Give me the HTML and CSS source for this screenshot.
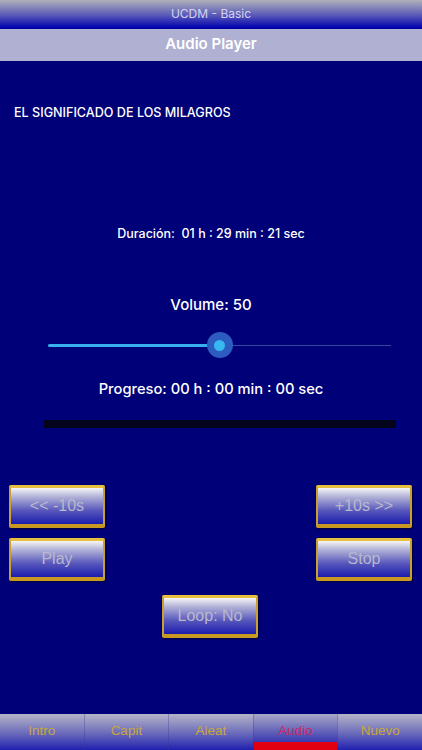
FILE: index.html
```html
<!DOCTYPE html>
<html lang="es">
<head>
  <meta charset="UTF-8">
  <meta name="viewport" content="width=device-width, initial-scale=1.0">
  <title>UCDM - Basic</title>
  <link rel="stylesheet" href="styles.css">
</head>
<body>

<div class="app">
  <div class="statusbar">UCDM - Basic</div>
  <div class="header">Audio Player</div>

  <div class="main">
    <p class="track-title">EL SIGNIFICADO DE LOS MILAGROS</p>
    <p class="duration">Duración:&nbsp; 01 h : 29 min : 21 sec</p>
    <p class="volume">Volume: 50</p>

    <!-- volume slider -->
    <div class="slider">
      <div class="slider-fill" style="width: 50%"></div>
      <div class="slider-rest"></div>
      <div class="slider-thumb" style="left: 50%"><span></span></div>
    </div>

    <p class="progress-label">Progreso: 00 h : 00 min : 00 sec</p>
    <div class="progress-bar"></div>

    <div class="controls">
      <div class="row">
        <button class="button">&lt;&lt; -10s</button>
        <button class="button">+10s &gt;&gt;</button>
      </div>
      <div class="row">
        <button class="button">Play</button>
        <button class="button">Stop</button>
      </div>
      <div class="row center">
        <button class="button">Loop: No</button>
      </div>
    </div>
  </div>

  <div class="tabbar">
    <div class="tab">Intro</div>
    <div class="tab">Capit</div>
    <div class="tab">Aleat</div>
    <div class="tab active">Audio</div>
    <div class="tab">Nuevo</div>
  </div>
</div>

</body>
</html>
```

FILE: styles.css
```css
body {
  margin: 0;
  background-color: #000078;
  font-family: Inter, Roboto, "Liberation Sans", sans-serif;
}
.app {
  height: 750px;
  display: flex;
  flex-direction: column;
}
p {
  margin: 0;
  color: white;
}
.statusbar {
  height: 28px;
  line-height: 28px;
  text-align: center;
  font-size: 12px;
  color: #d4d4f0;
  background: linear-gradient(#b0b0ba, #5858b8 55%, #0000b0);
  border-bottom: 1px solid #0000a0;
}
.header {
  height: 32px;
  line-height: 30px;
  text-align: center;
  font-size: 15px;
  font-weight: 600;
  color: white;
  background-color: #b0b0d2;
}
.main {
  flex: 1;
}
.track-title {
  margin: 44px 0 0 14px;
  font-size: 12.6px;
  line-height: 16px;
  font-weight: 500;
}
.duration {
  margin-top: 105px;
  text-align: center;
  font-size: 12.5px;
  line-height: 16px;
  font-weight: 500;
}
.volume {
  margin-top: 53px;
  text-align: center;
  font-size: 15px;
  line-height: 20px;
  font-weight: 500;
}
.slider {
  position: relative;
  display: flex;
  align-items: center;
  height: 30px;
  margin: 15px 31px 0 48px;
}
.slider-fill {
  height: 3px;
  background-color: #38b0f0;
  border-radius: 2px;
}
.slider-rest {
  flex: 1;
  height: 1px;
  background-color: #3848a0;
}
.slider-thumb {
  position: absolute;
  top: 2px;
  width: 26px;
  height: 26px;
  margin-left: -13px;
  border-radius: 50%;
  background-color: #2c5cc0;
  display: flex;
  align-items: center;
  justify-content: center;
}
.slider-thumb span {
  width: 11px;
  height: 11px;
  border-radius: 50%;
  background-color: #38b8f0;
}
.progress-label {
  margin-top: 19px;
  text-align: center;
  font-size: 14.7px;
  line-height: 20px;
  font-weight: 500;
}
.progress-bar {
  height: 8px;
  margin: 21px 26px 0 44px;
  background-color: #04041c;
}
.controls {
  margin-top: 57px;
  padding: 0 10px 0 9px;
}
.row {
  display: flex;
  justify-content: space-between;
  margin-bottom: 10px;
}
.row.center {
  justify-content: center;
  margin-top: 14px;
  padding-right: 1px;
}
.button {
  width: 96px;
  height: 43px;
  padding: 0;
  font-family: "Liberation Sans", Roboto, sans-serif;
  font-size: 16px;
  color: #b8b8cc;
  border-style: solid;
  border-width: 3px 2px 4px 2px;
  border-color: #e8c040 #c8a030 #c89820 #c8a030;
  border-radius: 2px;
  background: linear-gradient(#f6f6f6, #b8b8da 22%, #5858bc 62%, #1c1cae);
  box-shadow: 1px 1px 2px rgba(0, 0, 0, 0.5);
}
.tabbar {
  height: 36px;
  display: flex;
}
.tab {
  flex: 1;
  position: relative;
  text-align: center;
  line-height: 34px;
  font-family: "Liberation Sans", Roboto, sans-serif;
  font-size: 13.5px;
  color: #c8a838;
  background: linear-gradient(#b4b4c8, #7070bc 50%, #2020b0);
  border-left: 1px solid rgba(60, 60, 150, 0.35);
}
.tab:first-child {
  border-left: none;
}
.tab.active {
  color: #d02868;
  background: linear-gradient(#a8a8c8, #6060b8 50%, #1818a8);
}
.tab.active::after {
  content: "";
  position: absolute;
  left: 0;
  right: 0;
  bottom: 0;
  height: 8px;
  background-color: #e00010;
}
```
